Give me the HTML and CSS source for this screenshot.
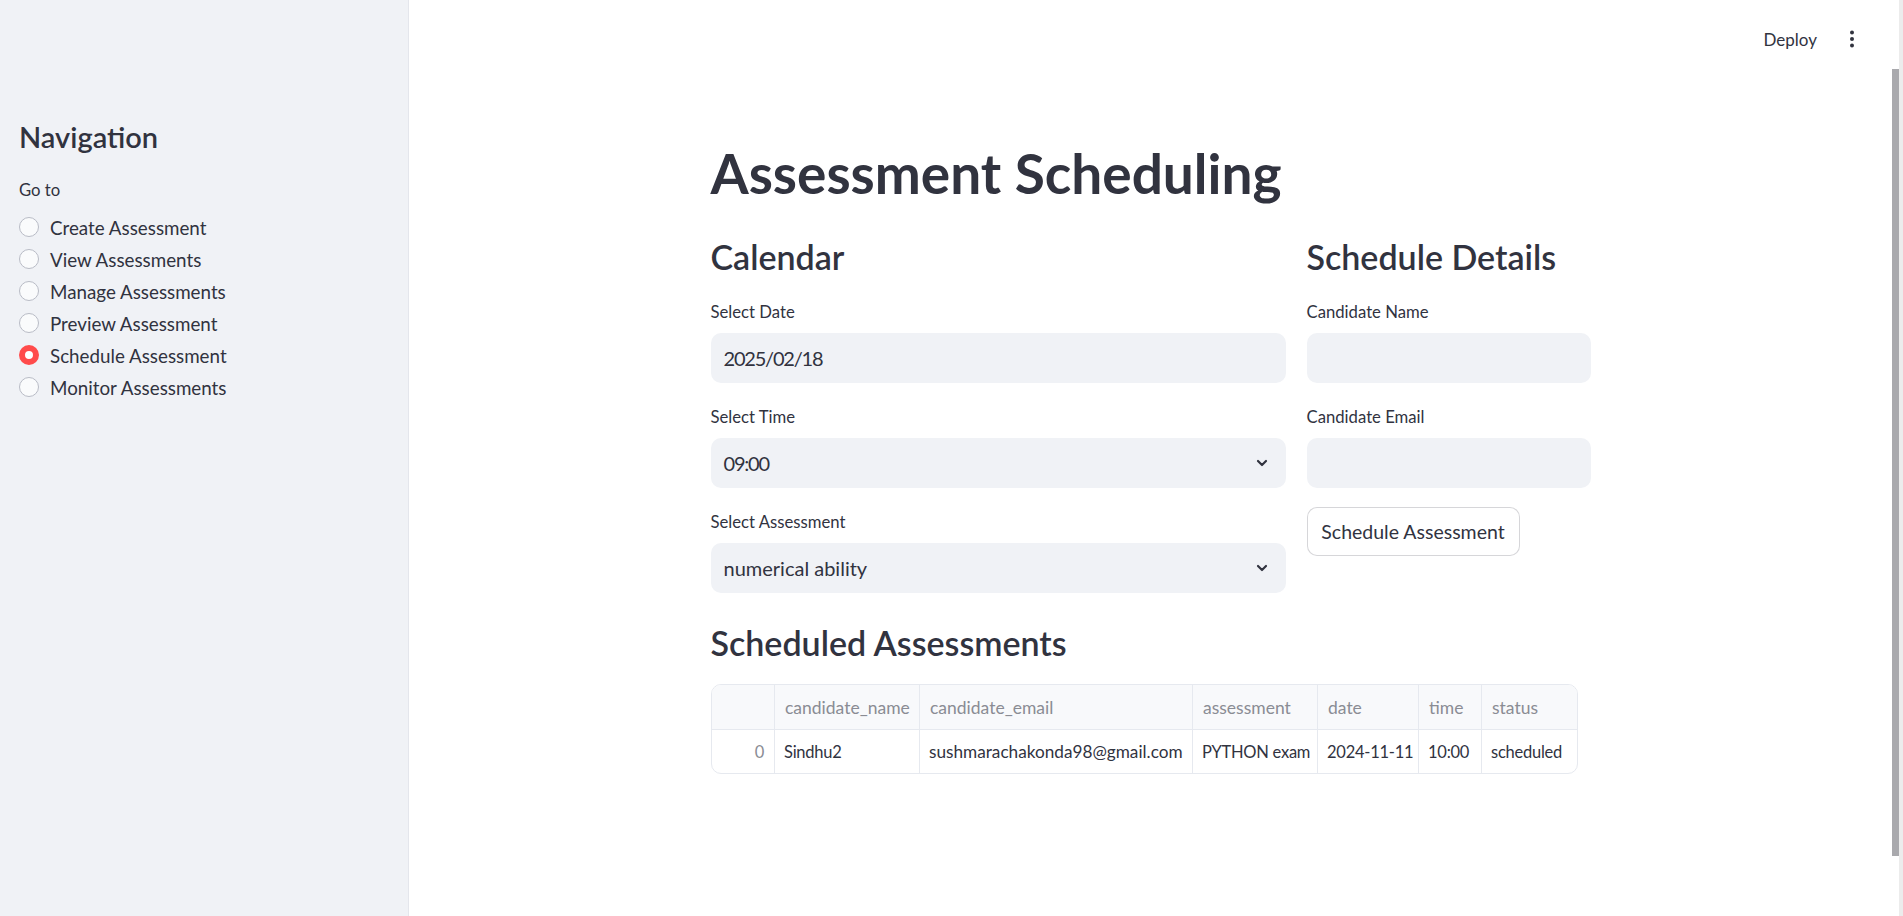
FILE: index.html
```html
<!DOCTYPE html>
<html lang="en">
<head>
<meta charset="utf-8">
<title>Assessment Scheduling</title>
<link rel="stylesheet" href="styles.css">
</head>
<body>
<div class="app">
  <aside class="sidebar">
    <h1 class="nav-title">Navigation</h1>
    <div class="radio-label">Go to</div>
    <div class="radio-group">
      <div class="radio"><span class="dot"></span><span>Create Assessment</span></div>
      <div class="radio"><span class="dot"></span><span>View Assessments</span></div>
      <div class="radio"><span class="dot"></span><span>Manage Assessments</span></div>
      <div class="radio"><span class="dot"></span><span>Preview Assessment</span></div>
      <div class="radio checked"><span class="dot"></span><span>Schedule Assessment</span></div>
      <div class="radio"><span class="dot"></span><span>Monitor Assessments</span></div>
    </div>
  </aside>
  <main class="main">
    <header class="topbar">
      <span class="deploy">Deploy</span>
      <svg class="kebab" viewBox="0 0 20 20" width="20" height="20"><circle cx="10" cy="3.5" r="2"/><circle cx="10" cy="10" r="2"/><circle cx="10" cy="16.5" r="2"/></svg>
    </header>
    <div class="block">
      <h1 class="title">Assessment Scheduling</h1>
      <div class="cols">
        <div class="col col-left">
          <h3 class="sub">Calendar</h3>
          <div class="field">
            <div class="label">Select Date</div>
            <div class="input"><span class="num">2025/02/18</span></div>
          </div>
          <div class="field">
            <div class="label">Select Time</div>
            <div class="input select"><span class="num">09:00</span><svg class="chev" viewBox="0 0 12 12" width="12" height="12"><path d="M2 4 L6 8 L10 4"/></svg></div>
          </div>
          <div class="field">
            <div class="label">Select Assessment</div>
            <div class="input select"><span>numerical ability</span><svg class="chev" viewBox="0 0 12 12" width="12" height="12"><path d="M2 4 L6 8 L10 4"/></svg></div>
          </div>
        </div>
        <div class="col col-right">
          <h3 class="sub">Schedule Details</h3>
          <div class="field">
            <div class="label">Candidate Name</div>
            <div class="input"></div>
          </div>
          <div class="field">
            <div class="label">Candidate Email</div>
            <div class="input"></div>
          </div>
          <button class="btn">Schedule Assessment</button>
        </div>
      </div>
      <h3 class="sub section">Scheduled Assessments</h3>
      <div class="table-wrap">
        <table class="df">
          <colgroup>
            <col class="c-idx"><col class="c-name"><col class="c-email"><col class="c-assess"><col class="c-date"><col class="c-time"><col class="c-status">
          </colgroup>
          <thead>
            <tr><th></th><th>candidate_name</th><th>candidate_email</th><th>assessment</th><th>date</th><th>time</th><th>status</th></tr>
          </thead>
          <tbody>
            <tr><td class="idx">0</td><td>Sindhu2</td><td class="wide">sushmarachakonda98@gmail.com</td><td>PYTHON exam</td><td>2024-11-11</td><td>10:00</td><td>scheduled</td></tr>
          </tbody>
        </table>
      </div>
    </div>
  </main>
  <div class="scrollbar"><div class="thumb"></div></div>
</div>
</body>
</html>
```

FILE: styles.css
```css
html, body {
  margin: 0;
  padding: 0;
}
body {
  font-family: "Lato", "Noto Sans", sans-serif;
  color: #31333f;
  background: #ffffff;
}
.app {
  display: flex;
  height: 916px;
  overflow: hidden;
}
.sidebar {
  flex: none;
  width: 409px;
  box-sizing: border-box;
  background: #f0f2f6;
  border-right: 1px solid #e4e6ec;
  padding: 119px 20px 0 19px;
}
.nav-title {
  margin: 0;
  font-size: 29px;
  font-weight: 600;
  line-height: 36px;
}
.radio-label {
  margin-top: 24px;
  font-size: 16.7px;
  line-height: 22px;
}
.radio-group {
  margin-top: 10px;
}
.radio {
  display: flex;
  align-items: center;
  gap: 11px;
  height: 32px;
  font-size: 18.8px;
}
.dot {
  flex: none;
  width: 20px;
  height: 20px;
  box-sizing: border-box;
  border-radius: 50%;
  border: 1px solid #b9bcc6;
  background: #fafbfc;
}
.radio.checked .dot {
  border: 6px solid #ff4b4b;
  background: #ffffff;
}
.main {
  flex: 1;
  display: flex;
  flex-direction: column;
  min-width: 0;
}
.topbar {
  height: 78px;
  display: flex;
  justify-content: flex-end;
  align-items: center;
  gap: 25px;
  padding-right: 30px;
}
.deploy {
  font-size: 17px;
}
.kebab {
  fill: #31333f;
}
.block {
  width: 880px;
  margin: 0 auto;
  padding-top: 62px;
}
.title {
  margin: 0;
  font-size: 55px;
  font-weight: 700;
  line-height: 66px;
}
.cols {
  display: flex;
  gap: 21px;
  margin-top: 30px;
}
.col-left {
  width: 575px;
}
.col-right {
  width: 284px;
}
.sub {
  margin: 0 0 23px;
  font-size: 34px;
  font-weight: 600;
  line-height: 42px;
}
.field + .field {
  margin-top: 23px;
}
.label {
  font-size: 16.7px;
  line-height: 22px;
  margin-bottom: 10px;
}
.input {
  height: 50px;
  box-sizing: border-box;
  background: #f0f2f6;
  border-radius: 10px;
  padding: 0 12px 0 13px;
  display: flex;
  align-items: center;
  font-size: 20px;
}
.num {
  letter-spacing: -1.2px;
}
.select {
  justify-content: space-between;
  padding-right: 18px;
}
.chev {
  fill: none;
  stroke: #31333f;
  stroke-width: 2.2;
  stroke-linecap: round;
  stroke-linejoin: round;
}
.btn {
  margin-top: 19px;
  height: 49px;
  width: 213px;
  box-sizing: border-box;
  background: #ffffff;
  border: 1px solid rgba(49, 51, 63, 0.2);
  border-radius: 10px;
  font-family: inherit;
  font-size: 19.5px;
  color: #31333f;
  padding: 0;
}
.sub.section {
  margin-top: 29px;
  margin-bottom: 20px;
}
.table-wrap {
  width: 867px;
  border: 1px solid #e6e9ef;
  border-radius: 10px;
  overflow: hidden;
  box-sizing: border-box;
}
.df {
  width: 100%;
  table-layout: fixed;
  border-collapse: collapse;
  font-size: 17.5px;
}
.c-idx { width: 63px; }
.c-name { width: 145px; }
.c-email { width: 273px; }
.c-assess { width: 125px; }
.c-date { width: 101px; }
.c-time { width: 63px; }
.c-status { width: 97px; }
.df th, .df td {
  text-align: left;
  padding: 0 0 0 10px;
  white-space: nowrap;
  overflow: hidden;
  border-left: 1px solid #e6e9ef;
}
.df th:first-child, .df td:first-child {
  border-left: none;
}
.df th {
  height: 44px;
  background: #f8f9fb;
  font-weight: 400;
  color: #8a8c94;
  border-bottom: 1px solid #e6e9ef;
}
.df td {
  height: 43px;
  font-size: 16.5px;
  letter-spacing: -0.25px;
  padding-left: 9px;
}
.df td.wide {
  font-size: 17.2px;
  letter-spacing: 0;
}
.df td.idx {
  text-align: right;
  padding: 0 10px 0 0;
  color: #8a8c94;
}
.scrollbar {
  flex: none;
  width: 11px;
  box-sizing: border-box;
  padding-top: 69px;
  border-right: 4px solid #ececec;
}
.thumb {
  width: 7px;
  height: 787px;
  background: #a9a9ad;
}
```
